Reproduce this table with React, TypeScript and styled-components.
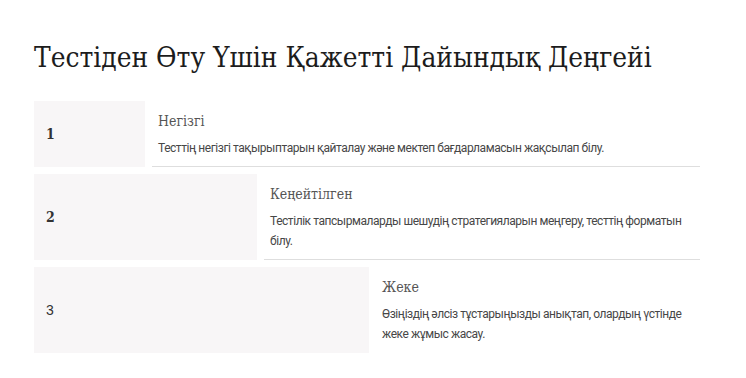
import React from "react";
import styled, { createGlobalStyle } from "styled-components";

const Global = createGlobalStyle`
  html, body { margin: 0; padding: 0; background: #ffffff; }
  body { font-family: "Liberation Serif", serif; }
`;

const Page = styled.main`
  padding: 38px 46px 0 34px;
`;

const Title = styled.h1`
  margin: 0 0 23px;
  font-family: "DejaVu Serif Condensed", "Liberation Serif", serif;
  font-weight: 400;
  font-size: 27.8px;
  line-height: 40px;
  color: #1c1c1c;
  white-space: nowrap;
`;

const List = styled.div`
  display: flex;
  flex-direction: column;
  gap: 7px;
`;

const Row = styled.div`
  display: flex;
  gap: 7px;
`;

const NumBox = styled.div<{ $w: number; $sans?: boolean }>`
  flex: 0 0 ${(p) => p.$w}px;
  background: #f8f6f7;
  display: flex;
  align-items: center;
  padding-left: 12px;
  box-sizing: border-box;
  font-family: ${(p) => (p.$sans ? '"Liberation Sans", sans-serif' : '"DejaVu Serif Condensed", "Liberation Serif", serif')};
  font-weight: ${(p) => (p.$sans ? 400 : 700)};
  font-size: 14px;
  color: #333;
`;

const Content = styled.div<{ $last?: boolean }>`
  flex: 1;
  padding: 10px 6px 8px;
  border-bottom: 1px solid ${(p) => (p.$last ? "transparent" : "#dedede")};
`;

const RowTitle = styled.div`
  font-family: "DejaVu Serif Condensed", "Liberation Serif", serif;
  font-size: 14px;
  line-height: 20px;
  color: #555;
  margin-bottom: 7px;
`;

const Desc = styled.div`
  font-family: "Roboto", sans-serif;
  font-size: 12px;
  letter-spacing: -0.45px;
  line-height: 20px;
  color: #474747;
`;

const items = [
  { n: "1", w: 111, t: "Негізгі", d: "Тесттің негізгі тақырыптарын қайталау және мектеп бағдарламасын жақсылап білу." },
  { n: "2", w: 223, t: "Кеңейтілген", d: "Тестілік тапсырмаларды шешудің стратегияларын меңгеру, тесттің форматын білу." },
  { n: "3", w: 335, t: "Жеке", d: "Өзіңіздің әлсіз тұстарыңызды анықтап, олардың үстінде жеке жұмыс жасау.", sans: true },
];

export default function App() {
  return (
    <>
      <Global />
      <Page>
        <Title>Тестіден Өту Үшін Қажетті Дайындық Деңгейі</Title>
        <List>
          {items.map((it, i) => (
            <Row key={it.n}>
              <NumBox $w={it.w} $sans={it.sans}>{it.n}</NumBox>
              <Content $last={i === items.length - 1}>
                <RowTitle>{it.t}</RowTitle>
                <Desc>{it.d}</Desc>
              </Content>
            </Row>
          ))}
        </List>
      </Page>
    </>
  );
}
